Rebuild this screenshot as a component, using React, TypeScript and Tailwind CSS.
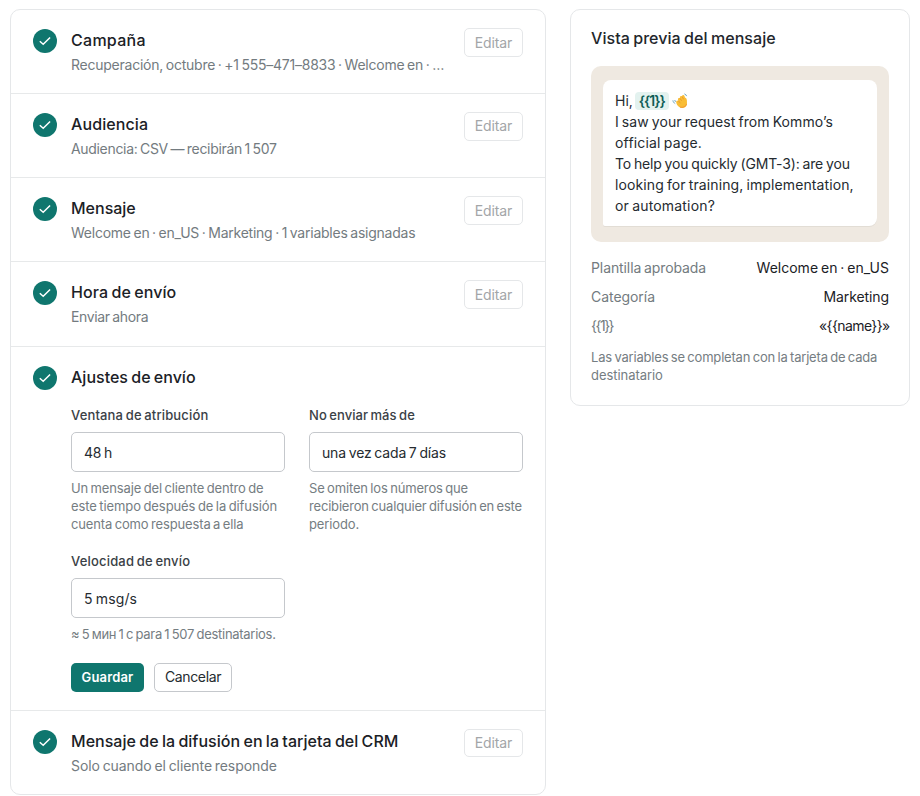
import React from 'react';

interface Line {
  text: string;
  className: string;
}

interface Step {
  title: Line;
  summary: Line;
}

const steps: Step[] = [
  {
    title: { text: 'Campaña', className: 'tracking-[0.28px]' },
    summary: { text: 'Recuperación, octubre · +1 555–471–8833 · Welcome en · …', className: 'tracking-[-0.24px]' }
  },
  {
    title: { text: 'Audiencia', className: 'tracking-[0.1px]' },
    summary: { text: 'Audiencia: CSV — recibirán 1 507', className: 'tracking-[-0.32px]' }
  },
  {
    title: { text: 'Mensaje', className: 'tracking-normal' },
    summary: { text: 'Welcome en · en_US · Marketing · 1 variables asignadas', className: 'tracking-[-0.24px]' }
  },
  {
    title: { text: 'Hora de envío', className: 'tracking-[0.08px]' },
    summary: { text: 'Enviar ahora', className: 'tracking-[-0.36px]' }
  }
];

const crmStep: Step = {
  title: { text: 'Mensaje de la difusión en la tarjeta del CRM', className: 'tracking-[0.03px]' },
  summary: { text: 'Solo cuando el cliente responde', className: 'tracking-[-0.08px]' }
};

const messageLines: Line[] = [
  { text: 'I saw your request from Kommo’s', className: 'tracking-[0.08px]' },
  { text: 'official page.', className: 'tracking-[0.18px]' },
  { text: 'To help you quickly (GMT-3): are you', className: 'tracking-[-0.13px]' },
  { text: 'looking for training, implementation,', className: 'tracking-[0.11px]' },
  { text: 'or automation?', className: 'tracking-[0.18px]' }
];

const details: { label: Line; value: Line }[] = [
  {
    label: { text: 'Plantilla aprobada', className: 'tracking-[-0.1px]' },
    value: { text: 'Welcome en · en_US', className: 'tracking-normal' }
  },
  {
    label: { text: 'Categoría', className: 'tracking-[-0.05px]' },
    value: { text: 'Marketing', className: 'tracking-[-0.1px]' }
  },
  {
    label: { text: '{{1}}', className: 'tracking-[-1.5px]' },
    value: { text: '«{{name}}»', className: 'tracking-[-0.6px] -mr-[0.6px]' }
  }
];

const StepIcon: React.FC = () => (
  <span className="mt-[1px] flex h-6 w-6 shrink-0 items-center justify-center rounded-full bg-[#0f766e]">
    <svg width="14" height="14" viewBox="0 0 14 14" fill="none">
      <path d="M1.8 7.2 5.2 10.2 12.1 3.5" stroke="#fff" strokeWidth="1.5" />
    </svg>
  </span>
);

const StepRow: React.FC<{ step: Step; first?: boolean }> = ({ step, first = false }) => (
  <div className={`flex gap-3.5 px-[22px] pt-[18px] ${first ? 'h-[82.75px]' : 'h-[84.15px] border-t border-[#e7e9ea]'}`}>
    <StepIcon />
    <div className="min-w-0 flex-1 whitespace-nowrap">
      <div className={`text-base leading-6 font-medium text-[#1b2126] ${step.title.className}`}>{step.title.text}</div>
      <div className={`mt-0.5 text-sm leading-[21px] text-[#737b80] ${step.summary.className}`}>{step.summary.text}</div>
    </div>
    <button
      type="button"
      className="h-[28.6px] w-[59px] shrink-0 rounded-[5px] border border-[#e5e7e9] text-sm tracking-[-0.15px] text-[#a3a6a8]"
    >
      Editar
    </button>
  </div>
);

interface FieldProps {
  label: Line;
  value: Line;
  hint: Line[];
}

const Field: React.FC<FieldProps> = ({ label, value, hint }) => (
  <div className="whitespace-nowrap">
    <div className={`text-[13px] leading-5 font-medium text-[#3a4146] ${label.className}`}>{label.text}</div>
    <div className="mt-[7px] flex h-10 items-center rounded-[5px] border border-[#c5c8cc] px-3 pt-0.5 text-sm text-[#252b30]">
      <span className={value.className}>{value.text}</span>
    </div>
    <div className="mt-[7px] text-[13px] leading-[18px] text-[#757d82]">
      {hint.map((line) => (
        <div key={line.text} className={line.className}>{line.text}</div>
      ))}
    </div>
  </div>
);

const WavingHand: React.FC = () => (
  <svg width="16" height="16" viewBox="0 0 16 16" fill="none" className="ml-[3px]">
    <path
      d="M4.2 9.6 4.3 8.2C4.8 7.4 5.7 7.4 6.3 8.1L5.9 5.9C6.1 4.9 7.2 4.6 7.9 5.3L7.9 3.9C8.2 3 9.3 2.8 10 3.5L10.3 2.4C11 1.6 12 1.8 12.4 2.7L13 4.6C14.2 5 14.8 6.2 14.9 7.5L15 11C14.8 13.5 12.8 15 10.2 15C7.2 15 4.9 12.7 4.2 9.6Z"
      fill="#f9bd35"
    />
    <path d="M6.3 8.1 8.4 9.8M7.9 5.3 9.7 7.7M10 3.5 11.6 6.3" stroke="#e28b2b" strokeWidth="0.7" />
    <path d="M8 14.2C11 15 13.7 13.6 14.6 11" stroke="#ef8f32" strokeWidth="0.8" />
    <path d="M0.9 7.4C1.1 8.9 2 10 3.2 10.6M2.8 7C2.9 7.9 3.2 8.4 3.7 8.9M12.4 0.9C13.5 1.2 14.3 2 14.6 3.1" stroke="#5b9bbd" strokeWidth="0.9" />
  </svg>
);

const App: React.FC = () => (
  <div className="flex h-[796px] w-[920px] items-start gap-6 bg-white px-2.5 pt-[9.4px] font-['Inter',sans-serif] [word-spacing:-1px]">
    <div className="w-[536px] rounded-[10px] border border-[#e5e7e9]">
      {steps.map((step, i) => (
        <StepRow key={step.title.text} step={step} first={i === 0} />
      ))}
      <div className="flex h-[364.2px] gap-3.5 border-t border-[#e7e9ea] px-[22px] pt-[18px]">
        <StepIcon />
        <div className="flex-1">
          <div className="text-base leading-6 font-medium tracking-[0.01px] text-[#1b2126]">Ajustes de envío</div>
          <div className="mt-4 grid grid-cols-2 gap-x-6 gap-y-[18px]">
            <Field
              label={{ text: 'Ventana de atribución', className: 'tracking-[0.15px]' }}
              value={{ text: '48 h', className: 'tracking-[-0.25px]' }}
              hint={[
                { text: 'Un mensaje del cliente dentro de', className: 'tracking-[-0.14px]' },
                { text: 'este tiempo después de la difusión', className: 'tracking-[-0.09px]' },
                { text: 'cuenta como respuesta a ella', className: 'tracking-[-0.14px]' }
              ]}
            />
            <Field
              label={{ text: 'No enviar más de', className: 'tracking-[0.05px]' }}
              value={{ text: 'una vez cada 7 días', className: 'tracking-[-0.16px]' }}
              hint={[
                { text: 'Se omiten los números que', className: 'tracking-[-0.16px]' },
                { text: 'recibieron cualquier difusión en este', className: 'tracking-[-0.18px]' },
                { text: 'periodo.', className: 'tracking-[-0.12px]' }
              ]}
            />
            <Field
              label={{ text: 'Velocidad de envío', className: 'tracking-[0.18px]' }}
              value={{ text: '5 msg/s', className: 'tracking-[0.14px]' }}
              hint={[{ text: '≈ 5 мин 1 с para 1 507 destinatarios.', className: 'tracking-[-0.28px]' }]}
            />
          </div>
          <div className="mt-[20.2px] flex gap-2.5">
            <button type="button" className="h-[29px] w-[73px] rounded-[5px] bg-[#0f766e] text-[13px] font-semibold tracking-[0.15px] text-white">
              Guardar
            </button>
            <button type="button" className="h-[29px] w-[78px] rounded-[5px] border border-[#c5c8cc] text-sm tracking-[-0.35px] text-[#252b30]">
              Cancelar
            </button>
          </div>
        </div>
      </div>
      <StepRow step={crmStep} />
    </div>

    <div className="h-[396.6px] w-[340px] rounded-[10px] border border-[#e5e7e9] px-5 pt-4 whitespace-nowrap">
      <div className="text-base leading-6 font-medium tracking-[0.06px] text-[#1f272c]">Vista previa del mensaje</div>
      <div className="mt-4 rounded-[10px] bg-[#efe9e1] px-3 pt-3.5 pb-4">
        <div className="rounded-lg rounded-bl-[2px] bg-white px-3 py-2.5 text-sm leading-[21px] text-[#252b30] shadow-[0_1px_0_rgba(0,0,0,0.05)]">
          <div className="flex h-[21px] items-center">
            <span>Hi,</span>
            <span className="ml-[2px] flex h-[18px] w-[34px] items-center justify-center rounded bg-[#e3f2ef] font-semibold tracking-[-1.1px] text-[#0f5e56]">
              {'{{1}}'}
            </span>
            <WavingHand />
          </div>
          {messageLines.map((line) => (
            <div key={line.text} className={line.className}>{line.text}</div>
          ))}
        </div>
      </div>
      <div className="mt-[14.9px] flex flex-col gap-2 text-sm leading-[21px]">
        {details.map(({ label, value }) => (
          <div key={label.text} className="flex justify-between">
            <span className={`text-[#737b80] ${label.className}`}>{label.text}</span>
            <span className={`text-[#1b2126] ${value.className}`}>{value.text}</span>
          </div>
        ))}
      </div>
      <div className="mt-3 text-[13px] leading-[18px] text-[#757d82]">
        <div className="tracking-[-0.19px]">Las variables se completan con la tarjeta de cada</div>
        <div className="tracking-[-0.05px]">destinatario</div>
      </div>
    </div>
  </div>
);

export default App;
